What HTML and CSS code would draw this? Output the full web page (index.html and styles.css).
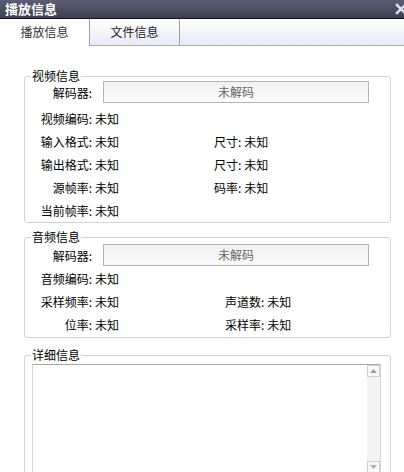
FILE: index.html
```html
<!DOCTYPE html>
<html lang="zh-CN">
<head>
<meta charset="utf-8">
<title>播放信息</title>
<link rel="stylesheet" href="styles.css">
</head>
<body>
<div class="window">
  <div class="titlebar">
    <span class="title">播放信息</span>
    <svg class="close" width="12" height="12" viewBox="0 0 12 12"><path d="M2 2 L10 10 M10 2 L2 10" stroke="#dcdee8" stroke-width="2.6" stroke-linecap="square"/></svg>
  </div>
  <div class="tabs">
    <div class="tab active">播放信息</div>
    <div class="tab">文件信息</div>
    <div class="tab-fill"></div>
  </div>
  <div class="panel">
    <fieldset class="group video">
      <legend>视频信息</legend>
      <div class="decoder"><span class="lbl">解码器:</span><div class="dbox">未解码</div></div>
      <div class="row"><div class="cell"><span class="lbl">视频编码:</span><span class="val">未知</span></div></div>
      <div class="row"><div class="cell"><span class="lbl">输入格式:</span><span class="val">未知</span></div><div class="cell2"><span class="lbl2">尺寸:</span><span class="val">未知</span></div></div>
      <div class="row"><div class="cell"><span class="lbl">输出格式:</span><span class="val">未知</span></div><div class="cell2"><span class="lbl2">尺寸:</span><span class="val">未知</span></div></div>
      <div class="row"><div class="cell"><span class="lbl">源帧率:</span><span class="val">未知</span></div><div class="cell2"><span class="lbl2">码率:</span><span class="val">未知</span></div></div>
      <div class="row"><div class="cell"><span class="lbl">当前帧率:</span><span class="val">未知</span></div></div>
    </fieldset>
    <fieldset class="group audio">
      <legend>音频信息</legend>
      <div class="decoder"><span class="lbl">解码器:</span><div class="dbox">未解码</div></div>
      <div class="row"><div class="cell"><span class="lbl">音频编码:</span><span class="val">未知</span></div></div>
      <div class="row"><div class="cell"><span class="lbl">采样频率:</span><span class="val">未知</span></div><div class="cell2"><span class="lbl2">声道数:</span><span class="val">未知</span></div></div>
      <div class="row"><div class="cell"><span class="lbl">位率:</span><span class="val">未知</span></div><div class="cell2"><span class="lbl2">采样率:</span><span class="val">未知</span></div></div>
    </fieldset>
    <fieldset class="group detail">
      <legend>详细信息</legend>
      <div class="textbox">
        <div class="text"></div>
        <div class="scrollbar">
          <div class="sbtn"><svg width="7" height="4" viewBox="0 0 7 4"><path d="M0 4 L3.5 0 L7 4 Z" fill="#9a9a9a"/></svg></div>
          <div class="track"></div>
          <div class="sbtn"><svg width="7" height="4" viewBox="0 0 7 4"><path d="M0 0 L3.5 4 L7 0 Z" fill="#b0b0b0"/></svg></div>
        </div>
      </div>
    </fieldset>
  </div>
</div>
</body>
</html>
```
FILE: styles.css
```css
html, body {
  margin: 0;
  padding: 0;
}
body {
  width: 404px;
  height: 472px;
  overflow: hidden;
  background: #ffffff;
  font-family: "Noto Sans CJK SC", "Noto Sans", sans-serif;
  font-size: 12px;
  color: #000;
}
.window {
  width: 404px;
  height: 472px;
  overflow: hidden;
}
.titlebar {
  height: 18px;
  border-bottom: 1px solid #15151c;
  background: linear-gradient(#5a5d73, #3d3f51);
  display: flex;
  align-items: center;
  overflow: hidden;
}
.title {
  margin-left: 5px;
  color: #ffffff;
  font-weight: bold;
  font-size: 13px;
  line-height: 18px;
}
.close {
  margin-left: auto;
  margin-right: -3px;
  flex: none;
}
.tabs {
  height: 26px;
  border-bottom: 1px solid #a9a9b6;
  background: linear-gradient(#ffffff, #e8eaf6);
  display: flex;
}
.tab {
  width: 89px;
  height: 26px;
  line-height: 26px;
  text-align: center;
  color: #222;
  font-size: 12px;
  border-right: 1px solid #9c9cab;
}
.tab.active {
  background: #ffffff;
  height: 27px;
  color: #333;
  position: relative;
  z-index: 1;
}
.tab-fill {
  flex: 1;
}
.panel {
  padding: 0;
}
.group {
  margin: 0 13px 0 24px;
  padding: 0;
  min-width: 0;
  border: 1px solid #d3d3d3;
  border-radius: 3px;
}
.group legend {
  margin-left: 6px;
  padding: 0 1px;
  line-height: 10px;
  font-size: 12px;
  color: #000;
}
.video {
  margin-top: 25px;
  --c1: 189px;
}
.audio {
  margin-top: 9px;
  padding-bottom: 1px;
  --c1: 200px;
}
.detail {
  margin-top: 12px;
}
.decoder {
  display: flex;
  align-items: center;
  height: 22px;
  margin-bottom: 4px;
}
.audio .decoder {
  margin-top: 2px;
  margin-bottom: 1px;
}
.lbl {
  width: 67px;
  flex: none;
  text-align: right;
  white-space: nowrap;
}
.dbox {
  margin-left: 11px;
  width: 266px;
  height: 22px;
  box-sizing: border-box;
  border: 1px solid #b4b4b4;
  background: linear-gradient(#f1f1f1, #fbfbfb);
  color: #666;
  text-align: center;
  line-height: 20px;
}
.row {
  display: flex;
  align-items: center;
  height: 23px;
}
.cell {
  display: flex;
  width: var(--c1);
  flex: none;
}
.cell2 {
  display: flex;
}
.lbl2 {
  white-space: nowrap;
}
.val {
  margin-left: 3px;
  white-space: nowrap;
}
.textbox {
  margin: 4px 9px 10px 7px;
  height: 110px;
  box-sizing: border-box;
  border: 1px solid #d6d6d6;
  border-top-color: #a8a8a8;
  display: flex;
}
.text {
  flex: 1;
}
.scrollbar {
  width: 13px;
  flex: none;
  display: flex;
  flex-direction: column;
  background: #f4f4f4;
}
.sbtn {
  height: 12px;
  box-sizing: border-box;
  border: 1px solid #cfcfcf;
  background: #f8f8f8;
  display: flex;
  align-items: center;
  justify-content: center;
}
.track {
  flex: 1;
}
```
